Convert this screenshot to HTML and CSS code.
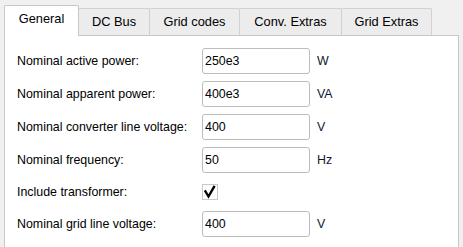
FILE: index.html
```html
<!DOCTYPE html>
<html lang="en">
<head>
    <meta charset="UTF-8">
    <title>Converter settings</title>
    <link rel="stylesheet" href="styles.css">
</head>
<body>
    <div class="tabs">
        <div class="tab active tab-general">General</div>
        <div class="tab tab-dc">DC Bus</div>
        <div class="tab tab-codes">Grid codes</div>
        <div class="tab tab-conv">Conv. Extras</div>
        <div class="tab tab-grid">Grid Extras</div>
    </div>
    <div class="panel">
        <div class="form">
            <label class="label">Nominal active power:</label>
            <input class="field" type="text" value="250e3">
            <span class="unit">W</span>

            <label class="label">Nominal apparent power:</label>
            <input class="field" type="text" value="400e3">
            <span class="unit">VA</span>

            <label class="label">Nominal converter line voltage:</label>
            <input class="field" type="text" value="400">
            <span class="unit">V</span>

            <label class="label">Nominal frequency:</label>
            <input class="field" type="text" value="50">
            <span class="unit">Hz</span>

            <label class="label">Include transformer:</label>
            <div class="check-cell">
                <span class="checkbox">
                    <svg width="16" height="16" viewBox="0 0 16 16">
                        <path d="M3.5 7.5 L6.5 12.5 L12 3" fill="none" stroke="#000" stroke-width="2.4" stroke-linecap="square" stroke-linejoin="miter"/>
                    </svg>
                </span>
            </div>
            <span class="unit"></span>

            <label class="label">Nominal grid line voltage:</label>
            <input class="field" type="text" value="400">
            <span class="unit">V</span>
        </div>
    </div>
</body>
</html>
```

FILE: styles.css
```css
body {
    margin: 0;
    background-color: #f0f0f0;
    font-family: "Liberation Sans", Arial, sans-serif;
    font-size: 12.4px;
    color: #000;
    height: 247px;
    overflow: hidden;
}
.tabs {
    display: flex;
    align-items: flex-end;
    height: 30px;
    padding-top: 5px;
    padding-left: 4px;
}
.tab {
    box-sizing: border-box;
    height: 27px;
    margin-left: -1px;
    border: 1px solid #d0d0d0;
    border-bottom: none;
    border-radius: 2px 2px 0 0;
    background-color: #ececec;
    text-align: center;
    line-height: 26px;
    font-size: 12.8px;
    color: #000;
}
.tab.active {
    height: 31px;
    margin-left: 0;
    margin-bottom: -1px;
    background-color: #fff;
    border-color: #c8c8c8;
    line-height: 26px;
    position: relative;
    z-index: 1;
}
.tab-general { width: 75px; }
.tab-dc { width: 72px; }
.tab-codes { width: 91px; }
.tab-conv { width: 103px; }
.tab-grid { width: 91px; }
.panel {
    margin-left: 4px;
    width: 455px;
    height: 220px;
    border: 1px solid #c8c8c8;
    border-bottom: none;
    background-color: #fff;
    box-sizing: border-box;
    padding: 12px 0 0 12px;
}
.form {
    display: grid;
    grid-template-columns: minmax(0, 178px) 108px auto;
    grid-template-rows: repeat(4, 26px) 24px 26px;
    column-gap: 7px;
    row-gap: 7px;
    align-items: center;
}
.label {
    white-space: nowrap;
}
.field {
    box-sizing: border-box;
    width: 108px;
    height: 26px;
    margin: 0;
    padding: 0 2px;
    border: 1px solid #bcbcbc;
    border-radius: 3px;
    font-family: inherit;
    font-size: 12.4px;
    color: #000;
    background-color: #fff;
    outline: none;
}
.unit {
    color: #101830;
}
.check-cell {
    display: flex;
    align-items: center;
}
.checkbox {
    display: block;
    box-sizing: border-box;
    width: 16px;
    height: 16px;
    border: 1px solid #c8c8c8;
    background-color: #fff;
}
.checkbox svg {
    display: block;
    margin: -1px 0 0 -1px;
}
```
